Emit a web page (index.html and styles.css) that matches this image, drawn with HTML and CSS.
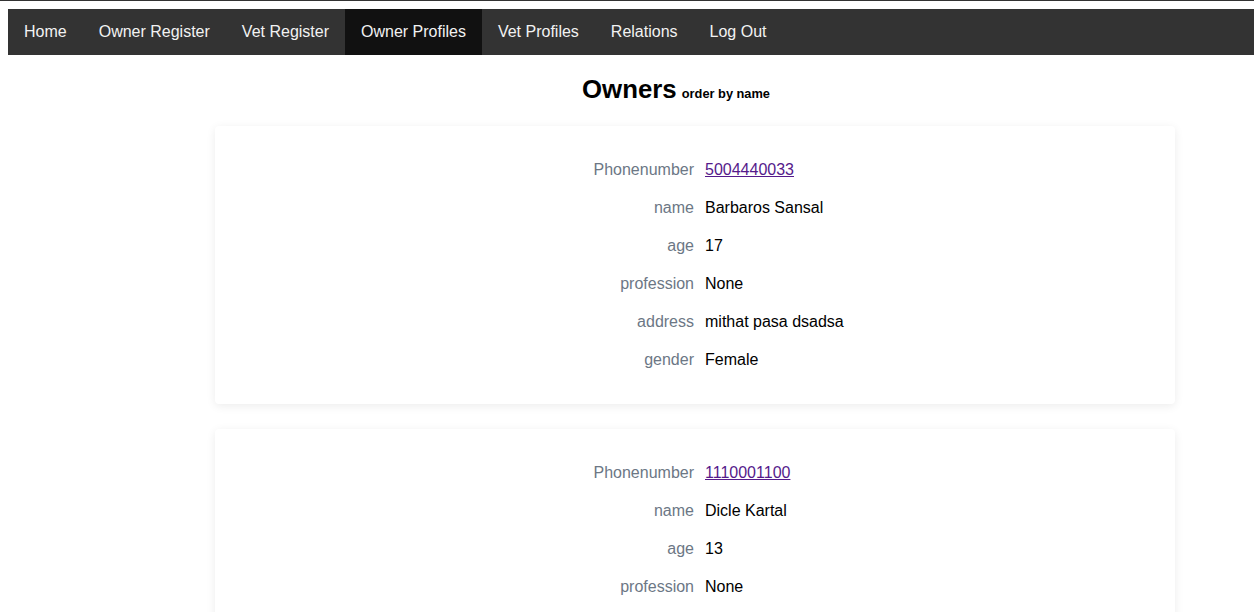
FILE: index.html
```html
<!DOCTYPE html>
<html>
<head>
<meta charset="utf-8">
<link rel="stylesheet" href="styles.css">
</head>
<body>
<nav class="topnav">
  <a href="#">Home</a>
  <a href="#">Owner Register</a>
  <a href="#">Vet Register</a>
  <a href="#" class="active">Owner Profiles</a>
  <a href="#">Vet Profiles</a>
  <a href="#">Relations</a>
  <a href="#">Log Out</a>
</nav>
<main class="content">
  <h2 class="title">Owners <small>order by name</small></h2>
  <div class="cards">
    <section class="card">
      <div class="row"><span class="label">Phonenumber</span><a class="value link" href="#">5004440033</a></div>
      <div class="row"><span class="label">name</span><span class="value">Barbaros Sansal</span></div>
      <div class="row"><span class="label">age</span><span class="value">17</span></div>
      <div class="row"><span class="label">profession</span><span class="value">None</span></div>
      <div class="row"><span class="label">address</span><span class="value">mithat pasa dsadsa</span></div>
      <div class="row"><span class="label">gender</span><span class="value">Female</span></div>
    </section>
    <section class="card">
      <div class="row"><span class="label">Phonenumber</span><a class="value link" href="#">1110001100</a></div>
      <div class="row"><span class="label">name</span><span class="value">Dicle Kartal</span></div>
      <div class="row"><span class="label">age</span><span class="value">13</span></div>
      <div class="row"><span class="label">profession</span><span class="value">None</span></div>
      <div class="row"><span class="label">address</span><span class="value">kadikoy</span></div>
      <div class="row"><span class="label">gender</span><span class="value">Female</span></div>
    </section>
  </div>
</main>
</body>
</html>
```
FILE: styles.css
```css
html {
  border-top: 1px solid #333;
  overflow: hidden;
}
body {
  margin: 8px 0 0 8px;
  font-family: "Liberation Sans", Arial, sans-serif;
  background: #fff;
  color: #000;
}
.topnav {
  display: flex;
  background: #333;
  height: 46px;
}
.topnav a {
  color: #f2f2f2;
  text-decoration: none;
  font-size: 16px;
  line-height: 18px;
  padding: 14px 16px;
}
.topnav a.active {
  background: #111;
}
.content {
  display: flex;
  flex-direction: column;
}
.title {
  margin: 19px 0 0 90px;
  text-align: center;
  font-size: 25.8px;
  line-height: 30px;
  font-weight: bold;
  word-spacing: -2px;
}
.title small {
  font-size: 12.8px;
  word-spacing: 0;
}
.cards {
  display: flex;
  flex-direction: column;
  gap: 25px;
  margin: 17px 0 0 207px;
  width: 960px;
}
.card {
  background: #fff;
  border-radius: 4px;
  box-shadow: 0 2px 10px rgba(0, 0, 0, 0.08);
  padding: 25px 0 25px;
}
.row {
  display: grid;
  grid-template-columns: 479px 1fr;
  column-gap: 11px;
  height: 38px;
  align-items: center;
  font-size: 16px;
}
.label {
  text-align: right;
  color: #6c7785;
}
.value {
  color: #000;
}
.link {
  justify-self: start;
  color: #551a8b;
  text-decoration: underline;
}
```
